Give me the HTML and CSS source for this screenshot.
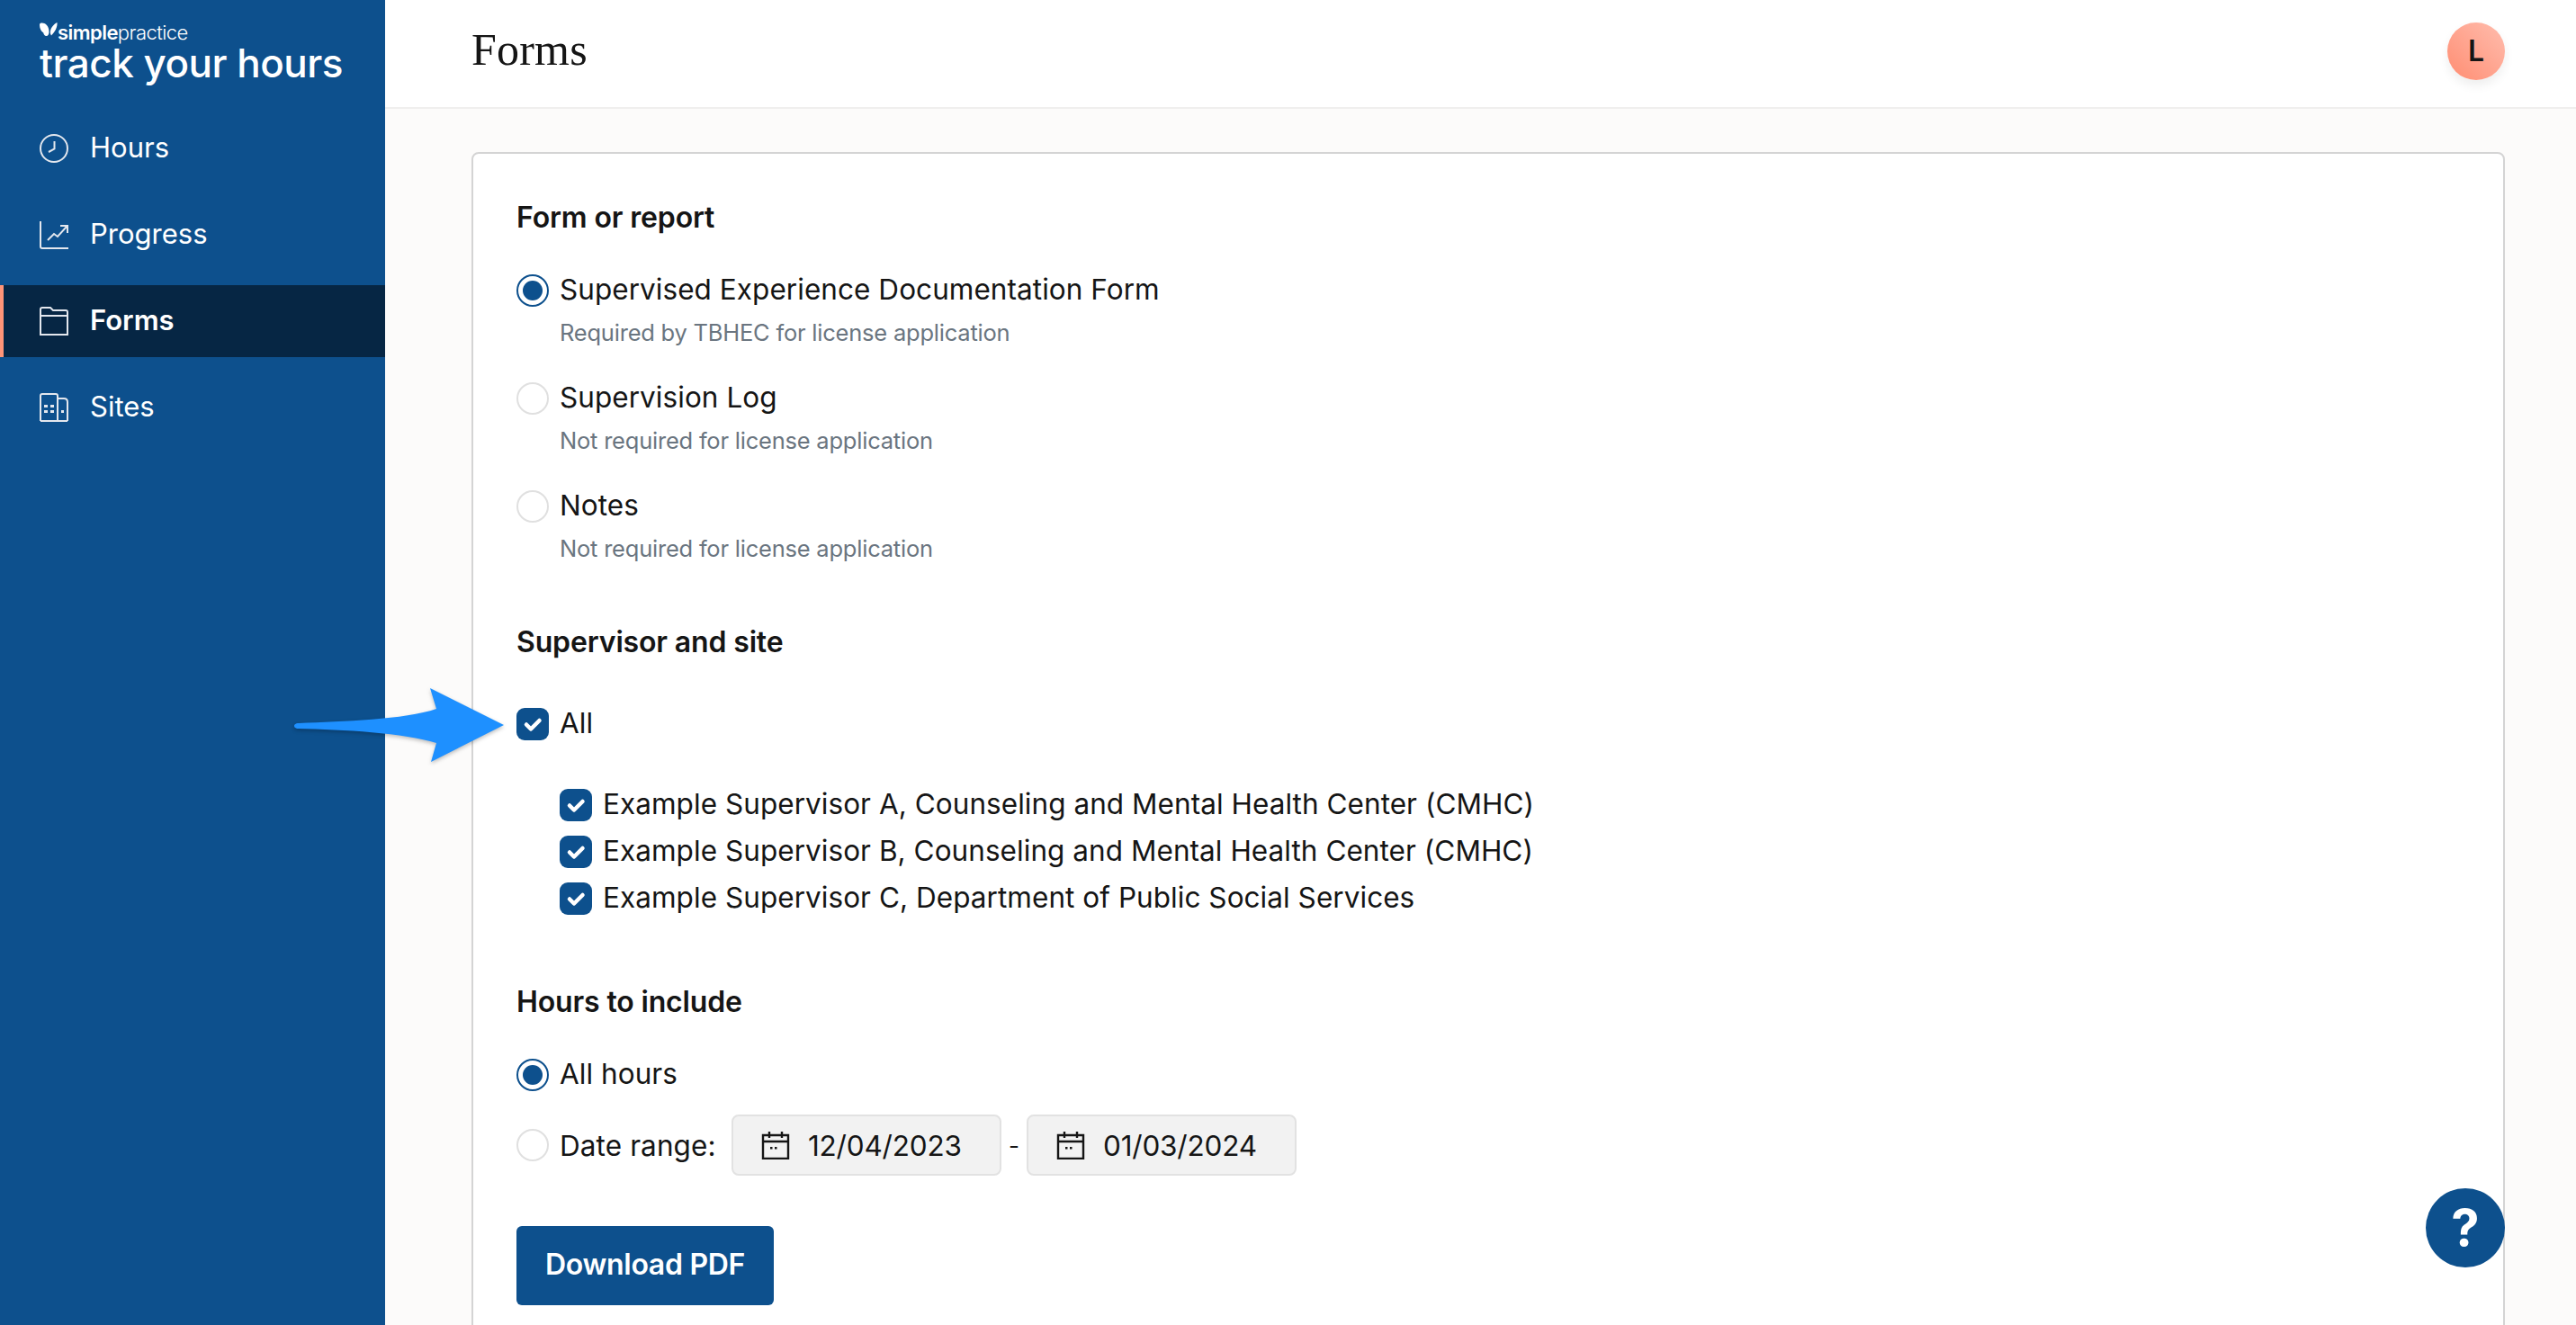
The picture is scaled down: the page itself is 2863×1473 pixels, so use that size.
FILE: index.html
```html
<!DOCTYPE html>
<html lang="en">
<head>
<meta charset="utf-8">
<title>Forms</title>
<link rel="stylesheet" href="styles.css">
</head>
<body>
<div class="app">
  <aside class="sidebar">
    <div class="brand">
      <div class="brand-top">
        <svg class="butterfly" viewBox="0 0 20 16"><path d="M0 2C1 0 5 0 8 3c2 2 2.500 5 2.500 8-.2 2-1 4-3 4-2 0-3-2-3.200-3.500C2 10 0 7 0 2Z" fill="#fff"/><path d="M19.500 0c.5 5-2 10-6.500 14.500-1-1.500-1.300-3-1-5C12.500 6 15.500 2 19.500 0Z" fill="#fff"/></svg>
        <span class="brand-simple">simple</span><span class="brand-practice">practice</span>
      </div>
      <div class="brand-name">track your hours</div>
    </div>
    <nav class="nav">
      <a class="nav-item">
        <svg class="nav-icon" viewBox="0 0 32 32"><circle cx="16" cy="16" r="15"/><path d="M16.500 8v8.500L10 20"/></svg>
        <span class="nav-label">Hours</span>
      </a>
      <a class="nav-item">
        <svg class="nav-icon" viewBox="0 0 32 32"><path d="M1 1v28c0 1 .5 2 2 2h29"/><path d="M9 22l7-7 4 3 10-11"/><path d="M23 6h8v8"/></svg>
        <span class="nav-label">Progress</span>
      </a>
      <a class="nav-item nav-item-active">
        <svg class="nav-icon" viewBox="0 0 32 32"><path d="M1 31V3c0-1 .5-2 2-2h9l3 3h14c1.500 0 2 1 2 2v25Z"/><path d="M1 10h30"/></svg>
        <span class="nav-label">Forms</span>
      </a>
      <a class="nav-item">
        <svg class="nav-icon" viewBox="0 0 32 32"><path d="M1 31h30M1 31V3q0-2 2-2h15q2 0 2 2v28M20 6h7q4 0 4 4v21"/><path class="dots" d="M5 13h4v3H5zM12 13h4v3h-4zM5 19h4v3H5zM12 19h4v3h-4zM24 19h3v3h-3z"/></svg>
        <span class="nav-label">Sites</span>
      </a>
    </nav>
  </aside>

  <main class="main">
    <header class="topbar">
      <h1 class="page-title">Forms</h1>
      <div class="avatar">L</div>
    </header>
    <div class="content">
      <section class="card">
        <h2 class="section-title">Form or report</h2>
        <div class="options">
          <div class="option">
            <div class="choice"><span class="radio radio-on"></span><span class="choice-text">Supervised Experience Documentation Form</span></div>
            <p class="hint">Required by TBHEC for license application</p>
          </div>
          <div class="option">
            <div class="choice"><span class="radio"></span><span class="choice-text">Supervision Log</span></div>
            <p class="hint">Not required for license application</p>
          </div>
          <div class="option">
            <div class="choice"><span class="radio"></span><span class="choice-text">Notes</span></div>
            <p class="hint">Not required for license application</p>
          </div>
        </div>

        <h2 class="section-title section-second">Supervisor and site</h2>
        <div class="choice choice-all">
          <span class="check"><svg viewBox="0 0 36 36"><path d="M11 18.500l5 5 9.500-9.500"/></svg></span><span class="choice-text">All</span>
        </div>
        <div class="children">
          <div class="choice"><span class="check"><svg viewBox="0 0 36 36"><path d="M11 18.500l5 5 9.500-9.500"/></svg></span><span class="choice-text">Example Supervisor A, Counseling and Mental Health Center (CMHC)</span></div>
          <div class="choice"><span class="check"><svg viewBox="0 0 36 36"><path d="M11 18.500l5 5 9.500-9.500"/></svg></span><span class="choice-text">Example Supervisor B, Counseling and Mental Health Center (CMHC)</span></div>
          <div class="choice"><span class="check"><svg viewBox="0 0 36 36"><path d="M11 18.500l5 5 9.500-9.500"/></svg></span><span class="choice-text">Example Supervisor C, Department of Public Social Services</span></div>
        </div>

        <h2 class="section-title section-third">Hours to include</h2>
        <div class="choice choice-hours"><span class="radio radio-on"></span><span class="choice-text">All hours</span></div>
        <div class="date-row">
          <span class="radio"></span><span class="date-label">Date range:</span>
          <div class="date-input">
            <svg class="cal" viewBox="0 0 32 32"><path d="M2 5h28v26H2zM2 12h28M9 1v7M23 1v7"/><path class="cal-dots" d="M10 18h2.500v2.500H10zM15 18h2.500v2.500H15z"/></svg>
            <span>12/04/2023</span>
          </div>
          <span class="date-sep">-</span>
          <div class="date-input">
            <svg class="cal" viewBox="0 0 32 32"><path d="M2 5h28v26H2zM2 12h28M9 1v7M23 1v7"/><path class="cal-dots" d="M10 18h2.500v2.500H10zM15 18h2.500v2.500H15z"/></svg>
            <span>01/03/2024</span>
          </div>
        </div>
        <button class="download">Download PDF</button>
      </section>
    </div>
  </main>

  <svg class="arrow" viewBox="0 0 240 90"><path d="M12 41C60 39 130 37 165 25L158 2 240 43 159 84 165 63C130 52 60 48 12 47 8 47 7 45 7 44S8 41 12 41Z"/></svg>
  <div class="help">?</div>
</div>
</body>
</html>
```

FILE: styles.css
```css
* { box-sizing: border-box; }
html, body { margin: 0; height: 100%; overflow: hidden; }
body { font-family: Inter, "Liberation Sans", sans-serif; color: #151515; background: #fff; }

.app { position: relative; display: flex; height: 1473px; overflow: hidden; }

.sidebar { width: 428px; flex: none; background: #0d508d; color: #fff; }
.brand { height: 125px; padding: 25px 0 0 44px; }
.brand-top { display: flex; align-items: flex-start; height: 22px; font-size: 22px; line-height: 22px; letter-spacing: -0.55px; }
.butterfly { width: 20px; height: 16px; flex: none; }
.brand-simple { font-weight: 600; }
.brand-practice { font-weight: 300; }
.brand-name { font-size: 44px; line-height: 47px; font-weight: 500; letter-spacing: -0.5px; }

.nav { display: flex; flex-direction: column; gap: 16px; }
.nav-item { display: flex; align-items: center; gap: 24px; height: 80px; padding-left: 44px; font-size: 31px; }
.nav-label { padding-bottom: 3px; }
.nav-icon { width: 32px; height: 32px; fill: none; stroke: #e3e7ee; stroke-width: 2; flex: none; }
.nav-icon .dots { fill: #e3e7ee; stroke: none; }
.nav-item-active { background: #062644; box-shadow: inset 4px 0 0 #ff9478; font-weight: 600; }

.main { flex: 1; min-width: 0; display: flex; flex-direction: column; background: #fcfbfa; }
.topbar { flex: none; height: 121px; display: flex; align-items: center; justify-content: space-between; padding: 0 79px 6px 96px; background: #fff; border-bottom: 2px solid #f0efee; }
.page-title { margin: 0; padding-bottom: 3px; font-family: "Liberation Serif", serif; font-weight: 400; font-size: 50px; letter-spacing: 0.2px; }
.avatar { width: 64px; height: 64px; border-radius: 50%; display: flex; align-items: center; justify-content: center; font-size: 32px; font-weight: 600; color: #151515; background: linear-gradient(225deg, #ffbdae, #ff8d72); box-shadow: 0 6px 12px rgba(0,0,0,0.07); }

.content { flex: 1; min-height: 0; padding: 48px 79px 0 96px; }
.card { height: 1400px; padding: 47px 48px; background: #fff; border: 2px solid #d4d4d4; border-radius: 8px; }

.section-title { margin: 0; font-size: 32px; line-height: 48px; font-weight: 600; letter-spacing: -0.15px; }
.section-second { margin-top: 60px; }
.section-third { margin-top: 73px; }

.options { display: flex; flex-direction: column; gap: 35px; margin-top: 39px; }
.choice { display: flex; align-items: center; gap: 12px; height: 36px; font-size: 31.500px; letter-spacing: 0.05px; }
.choice-text { padding-bottom: 4px; }
.hint { margin: 9px 0 0 48px; font-size: 25.500px; line-height: 40px; color: #6a7580; letter-spacing: -0.22px; }

.radio { position: relative; flex: none; width: 36px; height: 36px; border: 2px solid #e0e0e0; border-radius: 50%; background: #fff; }
.radio-on { border-color: #0d508d; }
.radio-on::after { content: ""; position: absolute; inset: 5px; border-radius: 50%; background: #0d508d; }

.check { flex: none; width: 36px; height: 36px; border-radius: 9px; background: #0d508d; }
.check svg { display: block; width: 36px; height: 36px; fill: none; stroke: #fff; stroke-width: 4.500; stroke-linecap: round; stroke-linejoin: round; }

.choice-all { margin-top: 49px; }
.children { display: flex; flex-direction: column; gap: 16px; margin: 54px 0 0 48px; }

.choice-hours { margin-top: 39px; }
.date-row { display: flex; align-items: center; margin-top: 26px; height: 68px; font-size: 31.500px; letter-spacing: -0.2px; }
.date-label { margin-left: 12px; width: 191px; letter-spacing: 0.1px; }
.date-input { display: flex; align-items: center; gap: 20px; width: 300px; height: 68px; padding-left: 31px; background: #f2f2f2; border: 2px solid #e2e2e2; border-radius: 8px; }
.date-sep { width: 28px; text-align: center; font-size: 26px; }
.cal { flex: none; width: 32px; height: 32px; fill: none; stroke: #151515; stroke-width: 2.400; }
.cal .cal-dots { fill: #151515; stroke: none; }

.download { display: block; margin-top: 56px; width: 286px; height: 88px; padding: 0 0 3px; border: 0; border-radius: 6px; background: #0d508d; color: #fff; font-family: inherit; font-size: 32px; font-weight: 600; letter-spacing: -0.3px; }

.arrow { position: absolute; left: 320px; top: 763px; width: 240px; height: 90px; fill: #1e90ff; filter: drop-shadow(0 2px 2px rgba(0,0,0,0.25)); }
.help { position: absolute; left: 2696px; top: 1321px; width: 88px; height: 88px; border-radius: 50%; background: #0d508d; color: #fff; display: flex; align-items: center; justify-content: center; font-size: 56px; font-weight: 700; }
```
